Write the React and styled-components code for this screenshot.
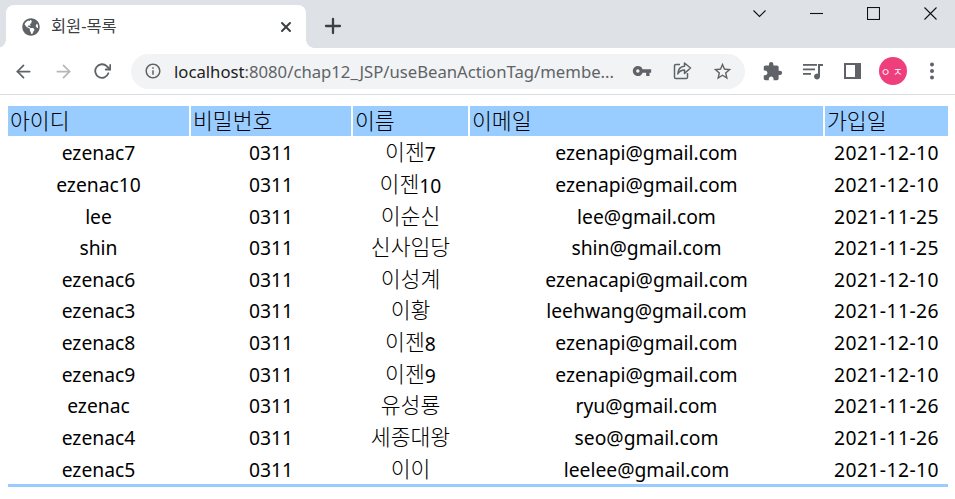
import React from "react";
import styled, { createGlobalStyle } from "styled-components";
import { FaGlobeAmericas } from "react-icons/fa";
import { MdExtension, MdOutlineInfo, MdOutlineStarBorder, MdVpnKey } from "react-icons/md";
import { FiArrowLeft, FiArrowRight, FiRotateCw, FiX, FiPlus } from "react-icons/fi";

const members = [
  ["ezenac7", "0311", "이젠7", "ezenapi@gmail.com", "2021-12-10"],
  ["ezenac10", "0311", "이젠10", "ezenapi@gmail.com", "2021-12-10"],
  ["lee", "0311", "이순신", "lee@gmail.com", "2021-11-25"],
  ["shin", "0311", "신사임당", "shin@gmail.com", "2021-11-25"],
  ["ezenac6", "0311", "이성계", "ezenacapi@gmail.com", "2021-12-10"],
  ["ezenac3", "0311", "이황", "leehwang@gmail.com", "2021-11-26"],
  ["ezenac8", "0311", "이젠8", "ezenapi@gmail.com", "2021-12-10"],
  ["ezenac9", "0311", "이젠9", "ezenapi@gmail.com", "2021-12-10"],
  ["ezenac", "0311", "유성룡", "ryu@gmail.com", "2021-11-26"],
  ["ezenac4", "0311", "세종대왕", "seo@gmail.com", "2021-11-26"],
  ["ezenac5", "0311", "이이", "leelee@gmail.com", "2021-12-10"],
];

const GlobalStyle = createGlobalStyle`
  html, body { margin: 0; padding: 0; background: #fff; }
  body { font-family: "Noto Sans", "Noto Sans CJK KR", sans-serif; overflow: hidden; }
`;

const Frame = styled.div`
  width: 955px;
  height: 499px;
  display: flex;
  flex-direction: column;
`;

const TabStrip = styled.div`
  flex: none;
  height: 48px;
  background: #dee1e6;
  display: flex;
  align-items: flex-end;
  padding-left: 6px;
  color: #3c4043;
`;

const Tab = styled.div`
  position: relative;
  width: 300px;
  height: 43px;
  background: #fff;
  border-radius: 8px 8px 0 0;
  display: flex;
  align-items: center;
  padding: 0 12px 0 16px;
  box-sizing: border-box;
  gap: 11px;

  &::before,
  &::after {
    content: "";
    position: absolute;
    bottom: 0;
    width: 8px;
    height: 8px;
  }
  &::before {
    left: -8px;
    background: radial-gradient(circle at 0 0, transparent 7.5px, #fff 8px);
  }
  &::after {
    right: -8px;
    background: radial-gradient(circle at 100% 0, transparent 7.5px, #fff 8px);
  }
`;

const TabTitle = styled.span`
  flex: 1;
  margin-bottom: 3px;
  font-size: 16.4px;
  color: #3c4043;
`;

const NewTab = styled.div`
  display: flex;
  margin: 0 0 10px 15px;
  align-self: flex-end;
  height: 24px;
`;

const WindowButtons = styled.div`
  margin-left: auto;
  align-self: flex-start;
  display: flex;
  gap: 44px;
  padding: 7px 18px 0 0;
`;

const Toolbar = styled.div`
  flex: none;
  height: 46px;
  border-bottom: 1px solid #dadce0;
  display: flex;
  align-items: center;
  padding-left: 13px;
  color: #5f6368;
`;

const NavButton = styled.div`
  width: 40px;
  display: flex;
  color: ${(p) => (p.$disabled ? "#b4b6ba" : "#5f6368")};
`;

const Omnibox = styled.div`
  width: 614px;
  height: 35px;
  margin-left: -2px;
  border-radius: 18px;
  background: #f1f3f4;
  display: flex;
  align-items: center;
  padding: 0 12px 0 13px;
  box-sizing: border-box;
`;

const Url = styled.div`
  flex: 1;
  margin-left: 12px;
  font-size: 16.7px;
  color: #5f6368;
  white-space: nowrap;
`;

const Host = styled.span`
  color: #202124;
`;

const OmniIcons = styled.div`
  display: flex;
  align-items: center;
  gap: 20px;
`;

const Extensions = styled.div`
  display: flex;
  align-items: center;
  margin-left: 17px;
  gap: 20px;
`;

const Avatar = styled.div`
  width: 28px;
  height: 28px;
  margin: 0 2px 0 -4px;
  border-radius: 50%;
  background: #ee3f7c;
  color: #fff;
  font-size: 10.5px;
  display: flex;
  align-items: center;
  justify-content: center;
  letter-spacing: 2.5px;
`;

const Content = styled.div`
  padding: 11px 7px 0 8px;
`;

const MemberTable = styled.table`
  width: 944px;
  table-layout: fixed;
  border-collapse: separate;
  border-spacing: 2px 0;
  margin: 0 -2px;
  font-size: 19.3px;
  line-height: 20px;
  color: #000;
`;

const Foot = styled.div`
  height: 3px;
  width: 940px;
  background: #99ccff;
`;

const Head = styled.th`
  background: #99ccff;
  font-weight: 400;
  text-align: left;
  height: 30px;
  padding: 1px 2px 0;
  box-sizing: border-box;
`;

const Cell = styled.td`
  text-align: center;
  height: 31.64px;
  padding: 3px 0 0;
  box-sizing: border-box;
  white-space: nowrap;
  letter-spacing: ${(p) => (p.$date ? "0.45px" : "0")};
`;

const Hangul = styled.span`
  font-size: 21.6px;
  font-weight: 300;
  vertical-align: 1px;
`;

const widths = [181, 160, 115, 353, 123];
const heads = ["아이디", "비밀번호", "이름", "이메일", "가입일"];

// hangul runs are set larger than the latin around them
const withHangul = (text) =>
  text.split(/([가-힣]+)/).map((part, i) =>
    /[가-힣]/.test(part) ? <Hangul key={i}>{part}</Hangul> : part
  );

const Thin = ({ children }) => (
  <svg width="13" height="13" viewBox="0 0 13 13" fill="none" stroke="#111" strokeWidth="1.1">
    {children}
  </svg>
);

const ShareIcon = () => (
  <svg width="20" height="20" viewBox="0 0 20 20" fill="none" stroke="#5f6368" strokeWidth="1.5">
    <path d="M8 3.5H3.8a1.3 1.3 0 0 0-1.3 1.3v11.4a1.3 1.3 0 0 0 1.3 1.3h10.4a1.3 1.3 0 0 0 1.3-1.3V12" />
    <path strokeLinejoin="round" d="M12.5 2v3.2C8.5 5.4 6 8 5.8 13c1.6-3 3.6-4 6.7-4v3.4L18.5 7z" />
  </svg>
);

const MusicIcon = () => (
  <svg width="20" height="20" viewBox="0 0 20 20" fill="#5f6368">
    <rect x="0" y="3" width="14" height="1.8" />
    <rect x="0" y="7.5" width="12" height="1.8" />
    <rect x="0" y="12" width="8" height="1.8" />
    <path d="M15 3h5v2h-3v10.5a3 3 0 1 1-2-2.8z" />
  </svg>
);

const PanelIcon = () => (
  <svg width="20" height="20" viewBox="0 0 20 20">
    <path fillRule="evenodd" fill="#5f6368" d="M1 2h17v16H1zM3 4v12h9V4z" />
  </svg>
);

const DotsIcon = () => (
  <svg width="6" height="20" viewBox="0 0 6 20" fill="#5f6368">
    <circle cx="3" cy="3.5" r="2" />
    <circle cx="3" cy="10" r="2" />
    <circle cx="3" cy="16.5" r="2" />
  </svg>
);

export default function App() {
  return (
    <Frame>
      <GlobalStyle />
      <TabStrip>
        <Tab>
          <FaGlobeAmericas size={18} color="#5f6368" />
          <TabTitle>회원-목록</TabTitle>
          <FiX size={16} strokeWidth={3} color="#3c4043" />
        </Tab>
        <NewTab>
          <FiPlus size={24} strokeWidth={2.3} />
        </NewTab>
        <WindowButtons>
          <Thin><path d="M0.5 3.5l6 6 6-6" /></Thin>
          <Thin><path d="M0 6.5h13" /></Thin>
          <Thin><rect x="0.5" y="0.5" width="12" height="12" /></Thin>
          <Thin><path d="M0.5 0.5l12 12M12.5 0.5l-12 12" /></Thin>
        </WindowButtons>
      </TabStrip>
      <Toolbar>
        <NavButton><FiArrowLeft size={21} /></NavButton>
        <NavButton $disabled><FiArrowRight size={21} /></NavButton>
        <NavButton><FiRotateCw size={18} strokeWidth={2.4} /></NavButton>
        <Omnibox>
          <MdOutlineInfo size={18} />
          <Url><Host>localhost</Host>:8080/chap12_JSP/useBeanActionTag/membe...</Url>
          <OmniIcons>
            <MdVpnKey size={20} />
            <ShareIcon />
            <MdOutlineStarBorder size={21} />
          </OmniIcons>
        </Omnibox>
        <Extensions>
          <MdExtension size={21} />
          <MusicIcon />
          <PanelIcon />
          <Avatar>ㅇㅈ</Avatar>
          <DotsIcon />
        </Extensions>
      </Toolbar>
      <Content>
        <MemberTable>
          <colgroup>
            {widths.map((w, i) => <col key={i} width={w} />)}
          </colgroup>
          <thead>
            <tr>{heads.map((h) => <Head key={h}>{withHangul(h)}</Head>)}</tr>
          </thead>
          <tbody>
            {members.map((m) => (
              <tr key={m[0]}>
                {m.map((v, i) => <Cell key={i} $date={i === 4}>{withHangul(v)}</Cell>)}
              </tr>
            ))}
          </tbody>
        </MemberTable>
        <Foot />
      </Content>
    </Frame>
  );
}
